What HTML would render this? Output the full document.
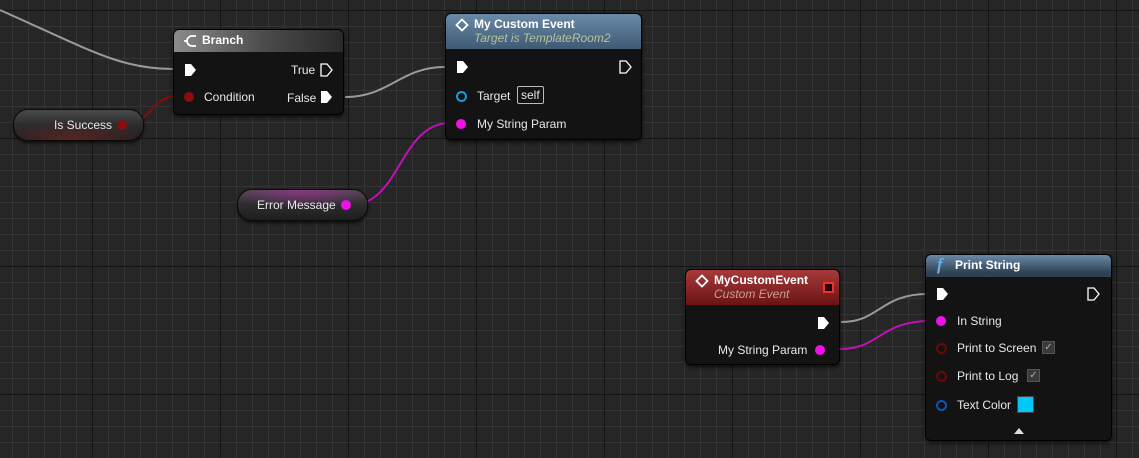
<!DOCTYPE html>
<html><head><style>
body{margin:0;width:1139px;height:458px;overflow:hidden;background:#262626;font-family:"Liberation Sans",sans-serif;font-size:12px;color:#e8e8e8;position:relative}
.grid{position:absolute;inset:0;
background-image:
linear-gradient(to right,#151515 1px,transparent 1px),
linear-gradient(to bottom,#151515 1px,transparent 1px),
linear-gradient(to right,#353535 1px,transparent 1px),
linear-gradient(to bottom,#353535 1px,transparent 1px);
background-size:128px 128px,128px 128px,16px 16px,16px 16px;
background-position:92px 10px,92px 10px,12px 10px,12px 10px}
svg.w{position:absolute;left:0;top:0}
.node{position:absolute;background:rgba(18,18,18,.95);border:1px solid #000;border-radius:6px;box-shadow:0 2px 4px rgba(0,0,0,.7)}
.hd{border-radius:5px 5px 0 0;padding:3px 8px;font-weight:bold;color:#fff;font-size:12px}
.sub{font-style:italic;font-weight:normal;font-size:12px}
.t{position:absolute;white-space:nowrap}
.pill{position:absolute;height:30px;border-radius:15px;border:1px solid #0a0a0a;box-shadow:0 2px 3px rgba(0,0,0,.7);font-size:12px;line-height:30px}
.exec{position:absolute;width:13px;height:14px}
.pin{position:absolute;width:10px;height:10px;border-radius:50%}
.cb{position:absolute;width:11px;height:11px;background:#3a3a3a;border:1px solid #555;font-size:10px;line-height:11px;text-align:center;color:#aaa}
</style></head><body>
<div class="grid"></div>
<svg class="w" width="1139" height="458">
<g fill="none" stroke-width="2">
<path d="M0 10 C90 50 120 69 173 69" stroke="#9a9a9a"/>
<path d="M345 97 C390 97 400 67 445 67" stroke="#9a9a9a"/>
<path d="M126 125 C150 125 150 96 178 96" stroke="#8a0c0c"/>
<path d="M351 205 C400 205 400 123 450 123" stroke="#c010b8"/>
<path d="M841 322 C880 322 880 294 928 294" stroke="#9a9a9a"/>
<path d="M840 349 C880 349 880 321 930 321" stroke="#c010b8"/>
</g></svg>

<!-- Branch -->
<div class="node" style="left:173px;top:29px;width:169px;height:84px">
<div class="hd" style="background:linear-gradient(to right,#8a8a8a,#4a4a4a 55%,#2a2a2a);height:16px;padding-left:28px">Branch</div>
<svg style="position:absolute;left:9px;top:4px" width="16" height="14"><path d="M13 2 H9 A5 5 0 0 0 9 12 H13 M1 7 H4" stroke="#fff" stroke-width="1.8" fill="none"/></svg>
<svg class="exec" style="left:10px;top:33px"><path d="M1 1H7L12 7 7 13H1Z" fill="#fff"/></svg>
<div class="t" style="left:117px;top:33px">True</div>
<svg class="exec" style="left:146px;top:33px"><path d="M1 1H7L12 7 7 13H1Z" fill="none" stroke="#fff" stroke-width="1.3"/></svg>
<div class="pin" style="left:10px;top:62px;background:#8a0c0c"></div>
<div class="t" style="left:30px;top:60px">Condition</div>
<div class="t" style="left:113px;top:61px">False</div>
<svg class="exec" style="left:146px;top:60px"><path d="M1 1H7L12 7 7 13H1Z" fill="#fff"/></svg>
</div>

<!-- Is Success -->
<div class="pill" style="left:13px;top:109px;width:129px;background:radial-gradient(ellipse 60% 60% at 45% 100%,rgba(140,40,40,.55),transparent),linear-gradient(#4a4a4a,#2c2c2c 50%,#1e1e1e)">
<span class="t" style="left:40px;top:0">Is Success</span>
<div class="pin" style="left:103px;top:10px;background:#8a0c0c"></div></div>

<!-- Error Message -->
<div class="pill" style="left:237px;top:189px;width:129px;background:radial-gradient(ellipse 60% 60% at 50% 0%,rgba(200,40,190,.5),transparent),linear-gradient(#4a4a4a,#2c2c2c 50%,#1e1e1e)">
<span class="t" style="left:19px;top:0">Error Message</span>
<div class="pin" style="left:103px;top:10px;background:#f010e8"></div></div>

<!-- My Custom Event (call) -->
<div class="node" style="left:445px;top:13px;width:195px;height:125px">
<div class="hd" style="background:linear-gradient(#6a8aa8,#3e5a74);height:29px;padding-left:28px;line-height:14px">My Custom Event<br><span class="sub" style="color:#b8c29a">Target is TemplateRoom2</span></div>
<svg style="position:absolute;left:9px;top:4px" width="14" height="14"><path d="M7 1.5L12.5 7 7 12.5 1.5 7Z" fill="none" stroke="#fff" stroke-width="1.8"/></svg>
<svg class="exec" style="left:10px;top:46px"><path d="M1 1H7L12 7 7 13H1Z" fill="#fff"/></svg>
<svg class="exec" style="left:173px;top:46px"><path d="M1 1H7L12 7 7 13H1Z" fill="none" stroke="#fff" stroke-width="1.3"/></svg>
<div class="pin" style="left:10px;top:77px;border:2px solid #1a9ad8;width:7px;height:7px"></div>
<div class="t" style="left:31px;top:75px">Target</div>
<div class="t" style="left:71px;top:72px;border:1px solid #bbb;padding:1px 3px;border-radius:2px">self</div>
<div class="pin" style="left:10px;top:105px;background:#f010e8"></div>
<div class="t" style="left:31px;top:103px">My String Param</div>
</div>

<!-- MyCustomEvent (event) -->
<div class="node" style="left:685px;top:269px;width:153px;height:94px">
<div class="hd" style="background:linear-gradient(#a83a3a,#6a1414);height:29px;padding-left:28px;line-height:14px">MyCustomEvent<br><span class="sub" style="color:#c8a090">Custom Event</span></div>
<svg style="position:absolute;left:9px;top:4px" width="14" height="14"><path d="M7 1.5L12.5 7 7 12.5 1.5 7Z" fill="none" stroke="#fff" stroke-width="1.8"/></svg>
<div style="position:absolute;left:137px;top:12px;width:7px;height:7px;border:2px solid #f03030;background:#200"></div>
<svg class="exec" style="left:131px;top:46px"><path d="M1 1H7L12 7 7 13H1Z" fill="#fff"/></svg>
<div class="t" style="left:32px;top:73px">My String Param</div>
<div class="pin" style="left:129px;top:75px;background:#f010e8"></div>
</div>

<!-- Print String -->
<div class="node" style="left:925px;top:254px;width:185px;height:185px">
<div class="hd" style="background:linear-gradient(#6a8aa8,#2e4254 80%);height:16px;padding-left:29px">Print String</div>
<div class="t" style="left:11px;top:0px;font-family:'Liberation Serif',serif;font-style:italic;font-size:17px;color:#6ab0e8;font-weight:bold">f</div>
<svg class="exec" style="left:10px;top:32px"><path d="M1 1H7L12 7 7 13H1Z" fill="#fff"/></svg>
<svg class="exec" style="left:161px;top:32px"><path d="M1 1H7L12 7 7 13H1Z" fill="none" stroke="#fff" stroke-width="1.3"/></svg>
<div class="pin" style="left:10px;top:61px;background:#f010e8"></div>
<div class="t" style="left:31px;top:59px">In String</div>
<div class="pin" style="left:10px;top:88px;border:2px solid #6a0808;width:7px;height:7px"></div>
<div class="t" style="left:31px;top:86px">Print to Screen</div>
<div class="cb" style="left:116px;top:86px">✓</div>
<div class="pin" style="left:10px;top:116px;border:2px solid #6a0808;width:7px;height:7px"></div>
<div class="t" style="left:31px;top:114px">Print to Log</div>
<div class="cb" style="left:101px;top:114px">✓</div>
<div class="pin" style="left:10px;top:145px;border:2px solid #1050c0;width:7px;height:7px"></div>
<div class="t" style="left:31px;top:143px">Text Color</div>
<div style="position:absolute;left:91px;top:141px;width:15px;height:15px;background:#00c8f8;border:1px solid #444"></div>
<svg style="position:absolute;left:87px;top:172px" width="12" height="8"><path d="M1 7L6 1 11 7Z" fill="#ddd"/></svg>
</div>
</body></html>
